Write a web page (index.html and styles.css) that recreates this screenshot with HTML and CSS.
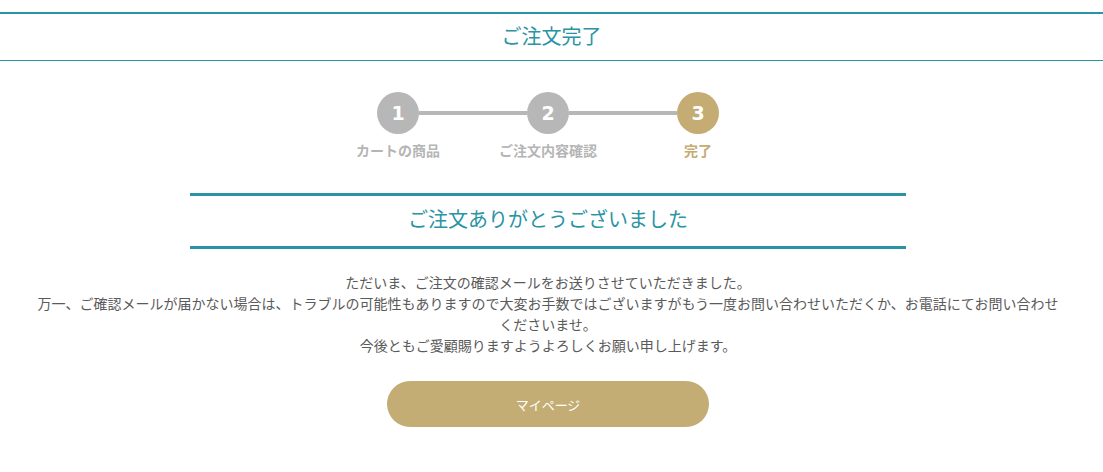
FILE: index.html
```html
<!DOCTYPE html>
<html lang="ja">
<head>
<meta charset="utf-8">
<title>ご注文完了</title>
<link rel="stylesheet" href="styles.css">
</head>
<body>
<header class="page-header">
  <h1 class="page-title">ご注文完了</h1>
</header>
<main class="main">
  <div class="steps">
    <div class="steps-track">
      <span class="step-circle">1</span>
      <span class="step-bar"></span>
      <span class="step-circle">2</span>
      <span class="step-bar"></span>
      <span class="step-circle is-current">3</span>
    </div>
    <div class="steps-labels">
      <span class="step-label">カートの商品</span>
      <span class="step-label">ご注文内容確認</span>
      <span class="step-label is-current">完了</span>
    </div>
  </div>
  <h2 class="thanks-heading">ご注文ありがとうございました</h2>
  <p class="message">ただいま、ご注文の確認メールをお送りさせていただきました。<br>万一、ご確認メールが届かない場合は、トラブルの可能性もありますので大変お手数ではございますがもう一度お問い合わせいただくか、お電話にてお問い合わせくださいませ。<br>今後ともご愛顧賜りますようよろしくお願い申し上げます。</p>
  <div class="actions">
    <a class="btn-mypage" href="#">マイページ</a>
  </div>
</main>
</body>
</html>
```

FILE: styles.css
```css
html, body {
  margin: 0;
  padding: 0;
  background: #fff;
}
body {
  font-family: "Noto Sans CJK JP", "Noto Sans", sans-serif;
  color: #555;
}
.page-header {
  margin-top: 12px;
  border-top: 2px solid #2a93a4;
  border-bottom: 1px solid #2a93a4;
  height: 46px;
  box-sizing: content-box;
  display: flex;
  align-items: center;
  justify-content: center;
}
.page-title {
  margin: 0 0 3px;
  font-size: 20px;
  font-weight: 400;
  color: #2a93a4;
  line-height: 1;
}
.main {
  width: 1096px;
  display: flex;
  flex-direction: column;
  align-items: center;
}
.steps {
  margin-top: 31px;
  display: flex;
  flex-direction: column;
  align-items: center;
}
.steps-track {
  display: flex;
  align-items: center;
}
.step-circle {
  width: 42px;
  height: 42px;
  border-radius: 50%;
  background: #b7b7b7;
  color: #fff;
  font-family: "DejaVu Sans", sans-serif;
  font-weight: 700;
  font-size: 19px;
  display: flex;
  align-items: center;
  justify-content: center;
}
.step-circle.is-current {
  background: #c4ac73;
}
.step-bar {
  width: 108px;
  height: 4px;
  background: #b7b7b7;
}
.steps-labels {
  margin-top: 6px;
  display: flex;
}
.step-label {
  width: 150px;
  text-align: center;
  font-size: 14px;
  font-weight: 700;
  line-height: 20px;
  color: #b5b5b5;
}
.step-label.is-current {
  color: #c4ac73;
}
.thanks-heading {
  margin: 33px 0 0;
  width: 716px;
  height: 45px;
  box-sizing: content-box;
  padding: 0 0 5px;
  border-top: 3px solid #2a93a4;
  border-bottom: 3px solid #2a93a4;
  display: flex;
  align-items: center;
  justify-content: center;
  font-size: 20px;
  font-weight: 400;
  line-height: 1;
  color: #2a93a4;
}
.message {
  margin: 23px 0 0;
  max-width: 1028px;
  text-align: center;
  font-size: 14px;
  line-height: 21px;
  color: #5a5a5a;
}
.actions {
  margin-top: 25px;
}
.btn-mypage {
  display: flex;
  align-items: center;
  justify-content: center;
  width: 322px;
  height: 46px;
  border-radius: 23px;
  background: #c4ad74;
  color: #fff;
  font-size: 13px;
  text-decoration: none;
}
```
